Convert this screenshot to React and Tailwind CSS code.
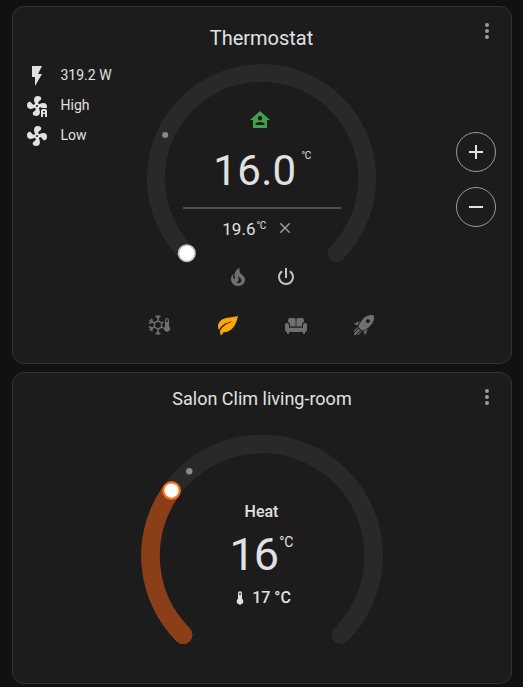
import React from "react";

const FAN =
  "M12,11A1,1 0 0,0 11,12A1,1 0 0,0 12,13A1,1 0 0,0 13,12A1,1 0 0,0 12,11M12.5,2C17,2 17.11,5.57 14.75,6.75C13.76,7.24 13.32,8.29 13.13,9.22C13.61,9.42 14.03,9.73 14.35,10.13C18.05,8.13 22.03,8.92 22.03,12.5C22.03,17 18.46,17.1 17.28,14.73C16.78,13.74 15.72,13.3 14.79,13.11C14.59,13.59 14.28,14 13.88,14.34C15.87,18.03 15.08,22 11.5,22C7,22 6.91,18.42 9.27,17.24C10.25,16.75 10.69,15.71 10.89,14.79C10.4,14.59 9.97,14.27 9.65,13.87C5.96,15.85 2,15.07 2,11.5C2,7 5.56,6.89 6.74,9.26C7.24,10.25 8.29,10.68 9.22,10.87C9.41,10.39 9.73,9.97 10.14,9.65C8.15,5.96 8.94,2 12.5,2Z";
const FLASH = "M7,2V13H10V22L17,10H13L17,2H7Z";
const HOME =
  "M12,3L2,12H5V20H19V12H22L12,3M12,8A2.25,2.25 0 0,1 14.25,10.25A2.25,2.25 0 0,1 12,12.5A2.25,2.25 0 0,1 9.75,10.25A2.25,2.25 0 0,1 12,8M12,14C13.5,14 16.5,14.75 16.5,16.25V17H7.5V16.25C7.5,14.75 10.5,14 12,14Z";
const FIRE =
  "M17.66 11.2C17.43 10.9 17.15 10.64 16.89 10.38C16.22 9.78 15.46 9.35 14.82 8.72C13.33 7.26 13 4.85 13.95 3C13 3.23 12.17 3.75 11.46 4.32C8.87 6.4 7.85 10.07 9.07 13.22C9.11 13.32 9.15 13.42 9.15 13.55C9.15 13.77 9 13.97 8.8 14.05C8.57 14.15 8.33 14.09 8.14 13.93C8.08 13.88 8.04 13.83 8 13.76C6.87 12.33 6.69 10.28 7.45 8.64C5.78 10 4.87 12.3 5 14.47C5.06 14.97 5.12 15.47 5.29 15.97C5.43 16.57 5.7 17.17 6 17.7C7.08 19.43 8.95 20.67 10.96 20.92C13.1 21.19 15.39 20.8 17.03 19.32C18.86 17.66 19.5 15 18.56 12.72L18.43 12.46C18.22 12 17.66 11.2 17.66 11.2M14.5 17.5C14.22 17.74 13.76 18 13.4 18.1C12.28 18.5 11.16 17.94 10.5 17.28C11.69 17 12.4 16.12 12.61 15.23C12.78 14.43 12.46 13.77 12.33 13C12.21 12.26 12.23 11.63 12.5 10.94C12.69 11.32 12.89 11.7 13.13 12C13.9 13 15.11 13.44 15.37 14.8C15.41 14.94 15.43 15.08 15.43 15.23C15.46 16.05 15.1 16.95 14.5 17.5Z";
const POWER =
  "M16.56,5.44L15.11,6.89C16.84,7.94 18,9.83 18,12A6,6 0 0,1 12,18A6,6 0 0,1 6,12C6,9.83 7.16,7.94 8.88,6.88L7.44,5.44C5.36,6.88 4,9.28 4,12A8,8 0 0,0 12,20A8,8 0 0,0 20,12C20,9.28 18.64,6.88 16.56,5.44M13,3H11V13H13";
const LEAF =
  "M22,2.6C20,4.6 15.5,3.8 9.5,5.3C4.6,6.6 1.8,10 2,13.5C2.1,15 2.5,16.2 3,17C5,12.8 10,9 16.5,8.5C11.4,10 6.6,12.8 3.9,18.2L4.6,22L6.2,21.4L7.4,19.3C15.5,19.4 20.5,12.5 22,2.6Z";
const ROCKET =
  "M13.13 22.19L11.5 18.36C13.07 17.78 14.54 17 15.9 16.09L13.13 22.19M5.64 12.5L1.81 10.87L7.91 8.1C7 9.46 6.22 10.93 5.64 12.5M21.61 2.39C21.61 2.39 16.66 .269 11 5.93C8.81 8.12 7.5 10.53 6.65 12.64C6.37 13.39 6.56 14.21 7.11 14.77L9.24 16.89C9.79 17.45 10.61 17.63 11.36 17.35C13.5 16.53 15.88 15.19 18.07 13C23.73 7.34 21.61 2.39 21.61 2.39M14.54 9.46C13.76 8.68 13.76 7.41 14.54 6.63S16.59 5.85 17.37 6.63C18.14 7.41 18.15 8.68 17.37 9.46C16.59 10.24 15.32 10.24 14.54 9.46M6.24 22L9.88 18.36C9.54 18.27 9.21 18.12 8.91 17.91L4.83 22H6.24M2 22H3.41L8.18 17.24L6.76 15.83L2 20.59V22M2 19.17L6.09 15.09C5.88 14.79 5.73 14.47 5.64 14.12L2 17.76V19.17Z";
const THERMOMETER =
  "M15 13V5A3 3 0 0 0 9 5V13A5 5 0 1 0 15 13M12 4A1 1 0 0 1 13 5V8H11V5A1 1 0 0 1 12 4Z";
const CLOSE =
  "M19,6.41L17.59,5L12,10.59L6.41,5L5,6.41L10.59,12L5,17.59L6.41,19L12,13.41L17.59,19L19,17.59L13.41,12L19,6.41Z";
const DOTS =
  "M12,16A2,2 0 0,1 14,18A2,2 0 0,1 12,20A2,2 0 0,1 10,18A2,2 0 0,1 12,16M12,10A2,2 0 0,1 14,12A2,2 0 0,1 12,14A2,2 0 0,1 10,12A2,2 0 0,1 12,10M12,4A2,2 0 0,1 14,6A2,2 0 0,1 12,8A2,2 0 0,1 10,6A2,2 0 0,1 12,4Z";

function Icon({ d, className = "size-6", children }) {
  return (
    <svg viewBox="0 0 24 24" fill="currentColor" className={`shrink-0 ${className}`}>
      {d && <path d={d} fillRule="evenodd" />}
      {children}
    </svg>
  );
}

function FanAuto() {
  return (
    <Icon d={FAN} className="mt-0.5 size-6">
      <path d="M15 24V16.5Q15 14 17.5 14H23V24Z" fill="#1c1c1c" />
      <path
        fillRule="evenodd"
        d="M18 15H20A2 2 0 0 1 22 17V23H20V20H18V23H16V17A2 2 0 0 1 18 15M18 17V18.5H20V17Z"
      />
    </Icon>
  );
}

function SnowThermometer() {
  return (
    <Icon>
      <g fill="none" stroke="currentColor" strokeWidth="1.5">
        <path d="M10 7.8L13.6 9.9V14.1L10 16.2L6.4 14.1V9.9Z" />
        <path d="M10 7.8V2M10 16.2V22M6.4 9.9L1.4 7.2M6.4 14.1L1.4 16.8M13.6 9.9L15.6 8.8M13.6 14.1L15.6 15.2" />
        <path d="M7.6 2.8L10 5L12.4 2.8M7.6 21.2L10 19L12.4 21.2M1 10.3L4 9L3.6 5.7M1 13.7L4 15L3.6 18.3" />
      </g>
      <path
        fillRule="evenodd"
        d="M21 13.5V7A2 2 0 0 0 17 7V13.5A3 3 0 1 0 21 13.5M19 6A.8.8 0 0 1 19.8 6.8V9H18.2V6.8A.8.8 0 0 1 19 6Z"
      />
    </Icon>
  );
}

function Sofa() {
  return (
    <Icon>
      <path d="M6.2 5H10Q11.6 5 11.6 6.6V13.6H6V11Q5.9 9.6 4 9.1V7.2Q4 5 6.2 5Z" />
      <path d="M17.8 5H14Q12.4 5 12.4 6.6V13.6H18V11Q18.1 9.6 20 9.1V7.2Q20 5 17.8 5Z" />
      <path d="M1 12A2 2 0 0 1 5 12V14.8H19V12A2 2 0 0 1 23 12V17Q23 19 21 19V21H19V19H5V21H3V19Q1 19 1 17Z" />
    </Icon>
  );
}

function Card({ title, titleClass, className, children }) {
  return (
    <section
      className={`flex flex-col rounded-xl border border-[#333333] bg-[#1c1c1c] ${className}`}
    >
      <header className="grid h-[57px] grid-cols-[48px_1fr_48px]">
        <h2 className={`col-start-2 text-center leading-6 ${titleClass}`}>{title}</h2>
        <button className="mt-3 ml-3 size-6 text-[#9b9b9b]">
          <Icon d={DOTS} />
        </button>
      </header>
      {children}
    </section>
  );
}

function Row({ icon, text }) {
  return (
    <li className="flex h-[30px] items-center gap-[11.5px] text-sm">
      {icon}
      <span className="whitespace-nowrap">{text}</span>
    </li>
  );
}

export default function App() {
  return (
    <main className="flex h-[687px] w-[523px] flex-col gap-2 overflow-hidden bg-[#111111] pt-1.5 pl-3 font-['Roboto',sans-serif] text-[#e1e1e1]">
      <Card title="Thermostat" titleClass="mt-[19px] pr-px text-[20px]" className="h-[358px] w-[500px]">
        <div className="flex h-[201px] items-start justify-between">
          <ul className="-mt-1 w-[134px] pl-3">
            <Row icon={<Icon d={FLASH} className="mt-0.5 size-6" />} text="319.2 W" />
            <Row icon={<FanAuto />} text="High" />
            <Row icon={<Icon d={FAN} className="mt-0.5 size-6" />} text="Low" />
          </ul>
          <div className="relative h-[201px] w-[229px]">
            <svg viewBox="0 0 229 201" className="h-[201px] w-[229px]">
              <path
                d="M39.7 189.3A105.7 105.7 0 1 1 189.3 189.3"
                fill="none"
                stroke="#292929"
                strokeWidth="17.8"
                strokeLinecap="round"
              />
              <circle cx="18.2" cy="71" r="3" fill="#8a8a8a" />
              <circle cx="39.8" cy="189.2" r="9" fill="#c4c4c4" />
              <circle cx="39.8" cy="189.2" r="7.4" fill="#fff" />
            </svg>
            <div className="absolute inset-0 flex flex-col items-center pt-11">
              <Icon d={HOME} className="mr-[3px] size-6 text-[#43a047]" />
              <div className="mt-[14px] ml-px flex items-start">
                <span className="text-[42px] leading-[50px] tracking-[0.3px]">16.0</span>
                <span className="mt-[4px] ml-[5px] text-[10px] leading-3 tracking-[-0.5px]">°C</span>
              </div>
              <div className="mt-[11px] h-0.5 w-[158px] bg-[#4f4f4f]" />
              <div className="mt-[8px] mr-[7px] flex items-start">
                <span className="text-[17px] leading-6">19.6</span>
                <span className="mt-[3px] ml-px text-[10px] leading-3 tracking-[-0.5px]">°C</span>
                <Icon d={CLOSE} className="mt-[2px] ml-[10px] size-[18px] text-[#9b9b9b]" />
              </div>
            </div>
          </div>
          <div className="flex w-[135px] flex-col items-end gap-[15px] pt-[68px] pr-[15px]">
            <button className="flex size-10 items-center justify-center rounded-full border border-[#9b9b9b]">
              <Icon d="M19,13H13V19H11V13H5V11H11V5H13V11H19V13Z" />
            </button>
            <button className="flex size-10 items-center justify-center rounded-full border border-[#9b9b9b]">
              <Icon d="M19,13H5V11H19V13Z" />
            </button>
          </div>
        </div>
        <div className="flex justify-center gap-6">
          <Icon d={FIRE} className="size-6 text-[#6f6f6f]" />
          <Icon d={POWER} className="size-6 text-[#c4c4c4]" />
        </div>
        <div className="mt-6 flex justify-center gap-11 text-[#6f6f6f]">
          <SnowThermometer />
          <Icon d={LEAF} className="size-6 text-[#ffa600]" />
          <Sofa />
          <Icon d={ROCKET} />
        </div>
      </Card>

      <Card
        title="Salon Clim living-room"
        titleClass="mt-[14px] text-[18px]"
        className="h-[312px] w-[500px]"
      >
        <div className="relative mx-auto mt-[5px] h-[212px] w-[242px]">
          <svg viewBox="0 0 242 212" className="h-[212px] w-[242px]">
            <g fill="none" strokeWidth="18.6" strokeLinecap="round">
              <path d="M42.2 199.8A111.7 111.7 0 1 1 199.8 199.8" stroke="#292929" />
              <path d="M42.2 199.8A111.7 111.7 0 0 1 30.5 55.6" stroke="#8b3f19" />
            </g>
            <circle cx="48.3" cy="36.3" r="3.2" fill="#8a8a8a" />
            <circle cx="30.5" cy="55.6" r="9.3" fill="#ff6f22" />
            <circle cx="30.5" cy="55.6" r="7.1" fill="#fff" />
          </svg>
          <div className="absolute inset-0 flex flex-col items-center pt-[65px] pr-px">
            <span className="text-base leading-6 font-medium">Heat</span>
            <div className="mt-[5px] flex items-start">
              <span className="text-[45px] leading-[52px] tracking-[-1px]">16</span>
              <span className="mt-[3px] ml-px text-sm leading-5">°C</span>
            </div>
            <div className="mt-[5px] flex items-center gap-1">
              <Icon d={THERMOMETER} className="size-4" />
              <span className="text-base leading-6 font-medium">17 °C</span>
            </div>
          </div>
        </div>
      </Card>
    </main>
  );
}
